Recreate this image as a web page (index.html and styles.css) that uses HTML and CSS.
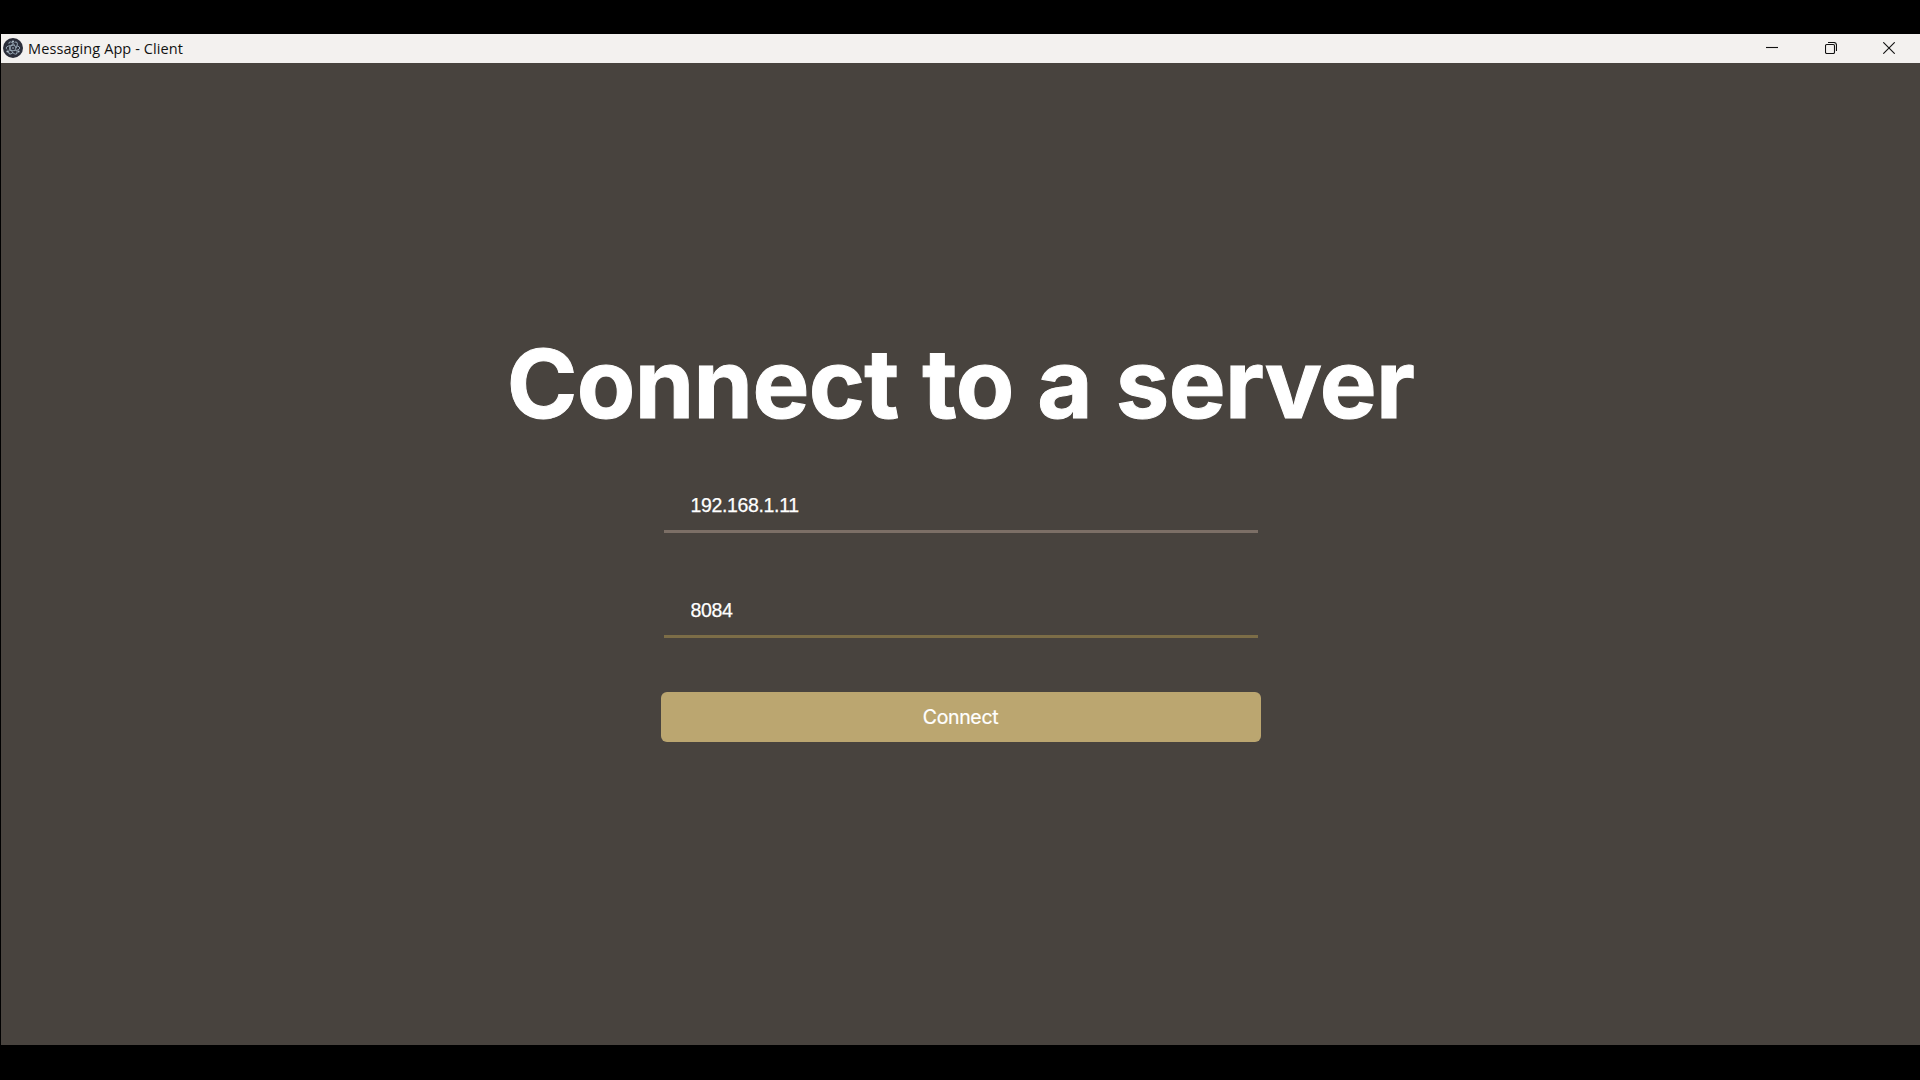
FILE: index.html
```html
<!DOCTYPE html>
<html lang="en">
<head>
<meta charset="utf-8">
<title>Messaging App - Client</title>
<link rel="stylesheet" href="styles.css">
</head>
<body>
<div class="window">
  <header class="titlebar">
    <svg class="app-icon" width="20" height="20" viewBox="0 0 20 20">
      <circle cx="10" cy="10" r="10" fill="#2b2e3a"/>
      <g fill="none" stroke="#9fb0bd" stroke-width=".9" stroke-dasharray="11 2.5">
        <ellipse cx="10" cy="10" rx="6.8" ry="2.7"/>
        <ellipse cx="10" cy="10" rx="6.8" ry="2.7" transform="rotate(60 10 10)"/>
        <ellipse cx="10" cy="10" rx="6.8" ry="2.7" transform="rotate(120 10 10)"/>
      </g>
      <g fill="#b5c4cf"><circle cx="10" cy="10" r=".8"/><circle cx="4.4" cy="13.4" r="1"/><circle cx="15.6" cy="13.4" r="1"/><circle cx="10" cy="3.4" r="1"/></g>
    </svg>
    <span class="title">Messaging App - Client</span>
    <div class="controls">
      <svg width="12" height="12" viewBox="0 0 12 12"><path d="M0 5.5H12"/></svg>
      <svg width="12" height="12" viewBox="0 0 12 12"><rect x=".5" y="2.5" width="9" height="9" rx="1.2"/><path d="M3 .5H8.8Q11.5 .5 11.5 3.2V9"/></svg>
      <svg width="12" height="12" viewBox="0 0 12 12"><path d="M.3 .3L11.7 11.7M11.7 .3L.3 11.7"/></svg>
    </div>
  </header>
  <main class="screen">
    <h1 class="heading">Connect to a server</h1>
    <form class="form">
      <input class="field" type="text" value="192.168.1.11" aria-label="Address">
      <input class="field field-port" type="text" value="8084" aria-label="Port">
      <button class="connect" type="button">Connect</button>
    </form>
  </main>
</div>
</body>
</html>
```
FILE: styles.css
```css
* { box-sizing: border-box; }
body {
  margin: 0;
  height: 1080px;
  padding: 34px 0 35px 1px;
  background: #000;
  overflow: hidden;
}
.window {
  height: 1011px;
  display: flex;
  flex-direction: column;
  background: #48433e;
}
.titlebar {
  height: 29px;
  display: flex;
  align-items: center;
  padding: 0 25px 1px 2px;
  background: #f3f1ef;
}
.title {
  margin-left: 5px;
  padding-top: 1px;
  font: 14.5px/20px "Open Sans", "Noto Sans", sans-serif;
  letter-spacing: 0.1px;
  color: #111;
}
.controls {
  margin-left: auto;
  display: flex;
  gap: 46.5px;
}
.controls svg {
  fill: none;
  stroke: #111;
  stroke-width: 1.1;
}
.screen {
  flex: 1;
  display: flex;
  flex-direction: column;
  align-items: center;
  padding-top: 262px;
}
.heading {
  margin: 0;
  font: 700 95.5px/116px Inter, sans-serif;
  letter-spacing: -0.6px;
  word-spacing: 1.6px;
  -webkit-text-stroke: 1px #fff;
  color: #fff;
  white-space: nowrap;
}
.form {
  width: 600px;
  display: flex;
  flex-direction: column;
  align-items: center;
  padding-top: 37px;
}
.field {
  width: 594px;
  height: 55px;
  margin-bottom: 50px;
  padding: 2px 27px 0;
  border: 0;
  border-bottom: 3px solid #7c6f66;
  border-radius: 0;
  outline: 0;
  background: transparent;
  font: 19.5px "Liberation Sans", Arial, sans-serif;
  letter-spacing: -0.35px;
  -webkit-text-stroke: 0.25px #fff;
  color: #fff;
}
.field-port { border-bottom-color: #7c6d47; }
.connect {
  width: 600px;
  height: 50px;
  margin-top: 4px;
  border: 0;
  border-radius: 6px;
  background: #bba670;
  font: 19.5px Inter, sans-serif;
  letter-spacing: -0.35px;
  -webkit-text-stroke: 0.2px #fff;
  color: #fff;
}
```
